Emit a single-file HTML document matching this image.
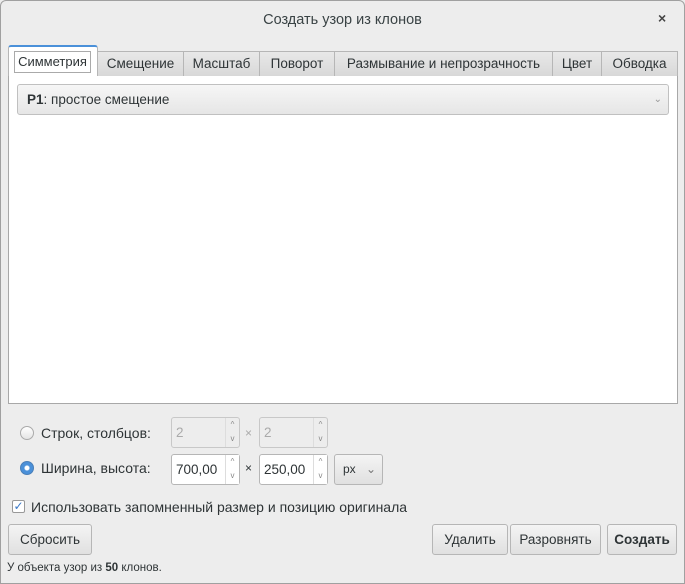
<!DOCTYPE html>
<html><head><meta charset="utf-8"><style>
*{box-sizing:border-box;margin:0;padding:0}
body{width:685px;height:584px;background:#ededed;font-family:"Liberation Sans","DejaVu Sans",sans-serif;font-size:13px;color:#2e3436;position:relative;overflow:hidden}
.win{position:absolute;left:0;top:0;width:685px;height:584px;border:1px solid #a0a0a0;border-radius:6px 6px 0 0}
.a{position:absolute}
.tab{position:absolute;top:51px;height:25px;background:linear-gradient(#e8e8e8,#d8d8d8);border:1px solid #b6b6b6;border-bottom:none;text-align:center;line-height:23px;font-size:13.5px}
.btn{position:absolute;height:31px;border:1px solid #b6b6b6;border-radius:3px;background:linear-gradient(#f4f4f4,#e0e0e0);text-align:center;line-height:29px;font-size:13.5px}
.spin{position:absolute;height:31px;border:1px solid #b6b6b6;border-radius:3px;background:#fff;line-height:29px;padding-left:4px;font-size:13.5px}
.spin.dis{background:#ededed;color:#aaa;border-color:#c8c8c8}
.arr{position:absolute;right:0;top:0;width:14px;height:29px;border-left:1px solid #ddd;font-size:8px;line-height:14px;text-align:center;color:#888}
</style></head><body>
<div class="win"></div>
<div class="a" style="left:0;top:12px;width:685px;text-align:center;font-size:14.5px;color:#3a4345">Создать узор из клонов</div>
<div class="a" style="left:658px;top:10px;font-size:14px;font-weight:bold;color:#444">×</div>

<div class="a" style="left:8px;top:75px;width:670px;height:329px;background:#fff;border:1px solid #a8a8a8"></div>
<div class="a" style="left:8px;top:45px;width:90px;height:31px;background:#fff;border:1px solid #b6b6b6;border-top:2px solid #4a90d9;border-bottom:none;border-radius:3px 3px 0 0"></div>
<div class="a" style="left:14px;top:51px;width:77px;height:22px;border:1px solid #aaa;text-align:center;line-height:20px;font-size:13px">Симметрия</div>
<div class="tab" style="left:97px;width:87px">Смещение</div>
<div class="tab" style="left:183px;width:77px">Масштаб</div>
<div class="tab" style="left:259px;width:76px">Поворот</div>
<div class="tab" style="left:334px;width:219px">Размывание и непрозрачность</div>
<div class="tab" style="left:552px;width:50px">Цвет</div>
<div class="tab" style="left:601px;width:77px">Обводка</div>

<div class="a" style="left:17px;top:84px;width:652px;height:31px;border:1px solid #c0c0c0;border-radius:3px;background:linear-gradient(#f6f6f6,#e6e6e6);line-height:29px;padding-left:9px;font-size:13.5px"><b>P1</b>: простое смещение<span style="position:absolute;right:6px;color:#999;font-size:10px">&#8964;</span></div>

<div class="a" style="left:20px;top:426px;width:14px;height:14px;border-radius:50%;border:1px solid #aaa;background:linear-gradient(#fff,#e4e4e4)"></div>
<div class="a" style="left:41px;top:425px;font-size:14px">Строк, столбцов:</div>
<div class="spin dis" style="left:171px;top:417px;width:69px">2<div class="arr">^<br>v</div></div>
<div class="a" style="left:245px;top:426px;color:#aaa;font-size:12px">×</div>
<div class="spin dis" style="left:259px;top:417px;width:69px">2<div class="arr">^<br>v</div></div>

<div class="a" style="left:20px;top:461px;width:14px;height:14px;border-radius:50%;border:1px solid #4a7fb8;background:radial-gradient(circle,#fff 0 2px,#4a90d9 3px)"></div>
<div class="a" style="left:41px;top:460px;font-size:14px">Ширина, высота:</div>
<div class="spin" style="left:171px;top:454px;width:69px">700,00<div class="arr" style="background:#fff">^<br>v</div></div>
<div class="a" style="left:245px;top:461px;font-size:12px">×</div>
<div class="spin" style="left:259px;top:454px;width:69px">250,00<div class="arr" style="background:#fff">^<br>v</div></div>
<div class="btn" style="left:334px;top:454px;width:49px;text-align:left;padding-left:8px;font-size:12px">px<span style="position:absolute;right:6px;color:#777">&#8964;</span></div>

<div class="a" style="left:12px;top:500px;width:13px;height:13px;border:1px solid #999;border-radius:2px;background:#fff;color:#3a78c8;font-size:12px;line-height:11px;text-align:center;font-weight:bold">✓</div>
<div class="a" style="left:31px;top:499px;font-size:14px">Использовать запомненный размер и позицию оригинала</div>

<div class="btn" style="left:8px;top:524px;width:84px">Сбросить</div>
<div class="btn" style="left:432px;top:524px;width:76px">Удалить</div>
<div class="btn" style="left:510px;top:524px;width:91px">Разровнять</div>
<div class="btn" style="left:607px;top:524px;width:70px;font-weight:bold">Создать</div>

<div class="a" style="left:7px;top:562px;font-size:11.5px">У объекта узор из <b>50</b> клонов.</div>
</body></html>
